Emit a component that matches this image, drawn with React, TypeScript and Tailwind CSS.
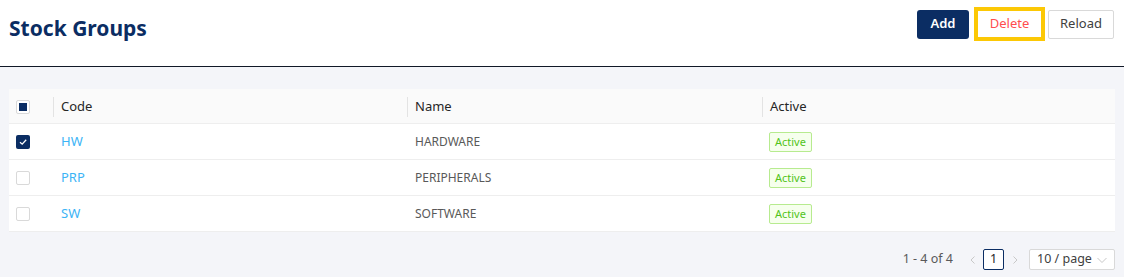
import React from "react";

const font = { fontFamily: '"Noto Sans", "Open Sans", Arial, sans-serif' };

function Check({ state }: { state: "none" | "checked" | "indeterminate" }) {
  if (state === "checked") {
    return (
      <span className="flex h-[14px] w-[14px] items-center justify-center rounded-[2px] bg-[#0b2d63]">
        <svg width="10" height="10" viewBox="0 0 10 10">
          <path d="M2 5.2 L4.2 7.2 L8.2 2.8" fill="none" stroke="#fff" strokeWidth="1.3" />
        </svg>
      </span>
    );
  }
  return (
    <span className="flex h-[14px] w-[14px] items-center justify-center rounded-[2px] border border-[#d9d9d9] bg-white">
      {state === "indeterminate" && <span className="h-[8px] w-[8px] bg-[#0b2d63]" />}
    </span>
  );
}

const rows = [
  { code: "HW", name: "HARDWARE", checked: true },
  { code: "PRP", name: "PERIPHERALS", checked: false },
  { code: "SW", name: "SOFTWARE", checked: false },
];

export default function App() {
  return (
    <div className="h-[277px] w-full bg-[#f4f5f9]" style={font}>
      <div className="flex h-[67px] items-start justify-between border-b border-[#111827] bg-white pl-[9px] pr-[10px]">
        <h1 className="pt-[14px] text-[21px] font-bold leading-[28px] text-[#0b2d63]">Stock Groups</h1>
        <div className="flex items-center pt-[7px]">
          <button className="h-[29px] w-[52px] rounded-[3px] bg-[#0b2d63] text-[13px] font-semibold text-white">
            Add
          </button>
          <div className="ml-[5px] flex h-[34px] w-[71px] items-center justify-center border-[4px] border-[#fcc805] bg-white text-[13px] text-[#ff4d4f]">
            Delete
          </div>
          <button className="ml-[3px] h-[29px] w-[66px] rounded-[2px] border border-[#d9d9d9] bg-white text-[13px] text-[#404040]">
            Reload
          </button>
        </div>
      </div>

      <div className="px-[9px] pt-[22px]">
        <div className="bg-white">
          <div className="grid h-[35px] grid-cols-[44px_354px_355px_1fr] items-center border-b border-[#eeeeee] bg-[#fafafa] pt-[1px] text-[13px] text-[#262626]">
            <div className="pl-[7px]">
              <Check state="indeterminate" />
            </div>
            {["Code", "Name", "Active"].map((h) => (
              <div key={h} className="relative pl-[8px]">
                <span className="absolute left-0 top-1/2 h-[20px] w-px -translate-y-1/2 bg-[#e3e3e3]" />
                {h}
              </div>
            ))}
          </div>
          {rows.map((r) => (
            <div
              key={r.code}
              className="grid h-[36px] grid-cols-[44px_354px_355px_1fr] items-center border-b border-[#eeeeee] pt-[1px] text-[12px]"
            >
              <div className="pl-[7px]">
                <Check state={r.checked ? "checked" : "none"} />
              </div>
              <div className="pl-[8px] text-[13px] text-[#3cb4f6]">{r.code}</div>
              <div className="pl-[8px] text-[#595959]">{r.name}</div>
              <div className="pl-[7px]">
                <span className="inline-flex h-[20px] items-center rounded-[2px] border border-[#b7eb8f] bg-[#f6ffed] px-[5px] text-[11px] text-[#52c41a]">
                  Active
                </span>
              </div>
            </div>
          ))}
        </div>

        <div className="mt-[17px] flex items-center justify-end text-[12.5px] text-[#595959]">
          <span>1 - 4 of 4</span>
          <svg className="ml-[15px]" width="10" height="10" viewBox="0 0 10 10">
            <path d="M6.5 1.5 L3 5 L6.5 8.5" fill="none" stroke="#c8c8c8" strokeWidth="1" />
          </svg>
          <span className="ml-[5px] flex h-[21px] w-[21px] items-center justify-center rounded-[2px] border border-[#0b2d63] bg-white text-[#262626]">
            1
          </span>
          <svg className="ml-[6px]" width="10" height="10" viewBox="0 0 10 10">
            <path d="M3.5 1.5 L7 5 L3.5 8.5" fill="none" stroke="#c8c8c8" strokeWidth="1" />
          </svg>
          <span className="ml-[9px] flex h-[21px] w-[86px] items-center justify-between rounded-[2px] border border-[#d9d9d9] bg-white pl-[7px] pr-[6px] text-[#404040]">
            10 / page
            <svg width="12" height="10" viewBox="0 0 12 10">
              <path d="M1.5 3 L6 7.5 L10.5 3" fill="none" stroke="#c8c8c8" strokeWidth="1" />
            </svg>
          </span>
        </div>
      </div>
    </div>
  );
}
